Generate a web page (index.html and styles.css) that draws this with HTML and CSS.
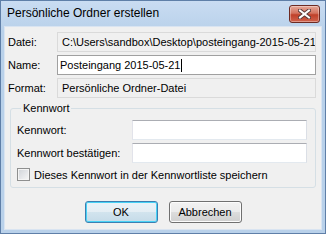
FILE: index.html
```html
<!DOCTYPE html>
<html lang="de">
<head>
<meta charset="utf-8">
<title>Persönliche Ordner erstellen</title>
<link rel="stylesheet" href="styles.css">
</head>
<body>
<div class="window">
  <div class="titlebar">
    <span class="title">Persönliche Ordner erstellen</span>
    <span class="close">
      <svg width="13" height="10" viewBox="0 0 13 10">
        <path d="M2 1.5 L11 8.5 M11 1.5 L2 8.5" stroke="#5a3a38" stroke-width="4" stroke-linecap="square" fill="none"/>
        <path d="M2 1.5 L11 8.5 M11 1.5 L2 8.5" stroke="#ffffff" stroke-width="2" stroke-linecap="square" fill="none"/>
      </svg>
    </span>
  </div>
  <div class="content">
    <div class="form">
      <span class="label">Datei:</span>
      <span class="field readonly">C:\Users\sandbox\Desktop\posteingang-2015-05-21</span>
      <span class="label">Name:</span>
      <span class="field edit">Posteingang 2015-05-21<span class="caret"></span></span>
      <span class="label">Format:</span>
      <span class="field readonly">Persönliche Ordner-Datei</span>
    </div>
    <fieldset class="group">
      <legend>Kennwort</legend>
      <div class="pwgrid">
        <span class="label">Kennwort:</span>
        <span class="field edit"></span>
        <span class="label">Kennwort bestätigen:</span>
        <span class="field edit"></span>
      </div>
      <div class="check">
        <span class="box"></span>
        <span>Dieses Kennwort in der Kennwortliste speichern</span>
      </div>
    </fieldset>
    <div class="buttons">
      <span class="btn default">OK</span>
      <span class="btn">Abbrechen</span>
    </div>
  </div>
</div>
</body>
</html>
```
FILE: styles.css
```css
* { box-sizing: border-box; }
html, body { margin: 0; padding: 0; }
body {
  width: 326px;
  height: 234px;
  font-family: "Liberation Sans", Arial, sans-serif;
  font-size: 11px;
  color: #000;
  background: #fff;
}
.window {
  width: 326px;
  height: 234px;
  display: flex;
  flex-direction: column;
  padding: 0 3px 3px 3px;
  border: 1px solid #5f7fa8;
  background: linear-gradient(#c9dcf2, #b9d1ea 30px, #b9d1ea);
}
.titlebar {
  height: 25px;
  display: flex;
  align-items: center;
  justify-content: space-between;
  padding: 0 2px 1px 3px;
}
.title {
  font-size: 12px;
  color: #000;
}
.close {
  width: 31px;
  height: 18px;
  margin-top: 2px;
  display: flex;
  align-items: center;
  justify-content: center;
  border: 1px solid #6d2a22;
  border-radius: 3px;
  background: linear-gradient(#e6a898, #d4735f 45%, #c0412a 55%, #d0624c);
  box-shadow: inset 0 0 0 1px rgba(255,255,255,0.35);
}
.content {
  flex: 1;
  background: #f0f0f0;
  border: 1px solid #d9e4f1;
  padding: 5px 5px 0 3px;
  display: flex;
  flex-direction: column;
}
.form {
  display: grid;
  grid-template-columns: 49px 1fr;
  grid-auto-rows: 20px;
  row-gap: 3px;
  align-items: center;
}
.label { white-space: nowrap; }
.field {
  height: 20px;
  display: flex;
  align-items: center;
  white-space: nowrap;
  overflow: hidden;
}
.readonly {
  background: #f0f0f0;
  border: 1px solid #dadada;
  padding-left: 4px;
}
.edit {
  background: #fff;
  border: 1px solid #abadb3;
  border-color: #abadb3 #dbdfe6 #e3e9ef #e2e3ea;
  padding-left: 2px;
}
.form .edit { border-color: #a0a0a0; }
.caret {
  display: inline-block;
  width: 1px;
  height: 13px;
  background: #000;
  margin-left: 1px;
}
.group {
  margin: 3px 0 0 2px;
  padding: 5px 8px 5px 6px;
  border: 1px solid #d5dfe5;
  border-radius: 3px;
  min-width: 0;
}
.group legend {
  padding: 0 2px;
  margin-left: 4px;
  line-height: 14px;
}
.pwgrid {
  display: grid;
  grid-template-columns: 115px 1fr;
  grid-auto-rows: 20px;
  row-gap: 3px;
  align-items: center;
}
.check {
  display: flex;
  align-items: center;
  gap: 4px;
  margin-top: 4px;
  height: 15px;
}
.box {
  width: 13px;
  height: 13px;
  border: 1px solid #8e8f8f;
  background: linear-gradient(135deg, #cfd3d8, #f7f7f7);
  box-shadow: inset 0 0 0 1px #f4f4f4;
}
.buttons {
  display: flex;
  justify-content: center;
  gap: 11px;
  margin-top: 13px;
  padding-left: 2px;
}
.btn {
  width: 73px;
  height: 22px;
  display: flex;
  align-items: center;
  justify-content: center;
  border: 1px solid #707070;
  border-radius: 3px;
  background: linear-gradient(#f2f2f2, #ebebeb 50%, #dddddd 50%, #cfcfcf);
  box-shadow: inset 0 0 0 1px #fcfcfc;
}
.btn.default {
  border-color: #3c7fb1;
  background: linear-gradient(#eaf3f8, #e4eef4 50%, #d2e4ee 50%, #c5dbe8);
  box-shadow: inset 0 0 0 1px #48d2f6;
}
```
